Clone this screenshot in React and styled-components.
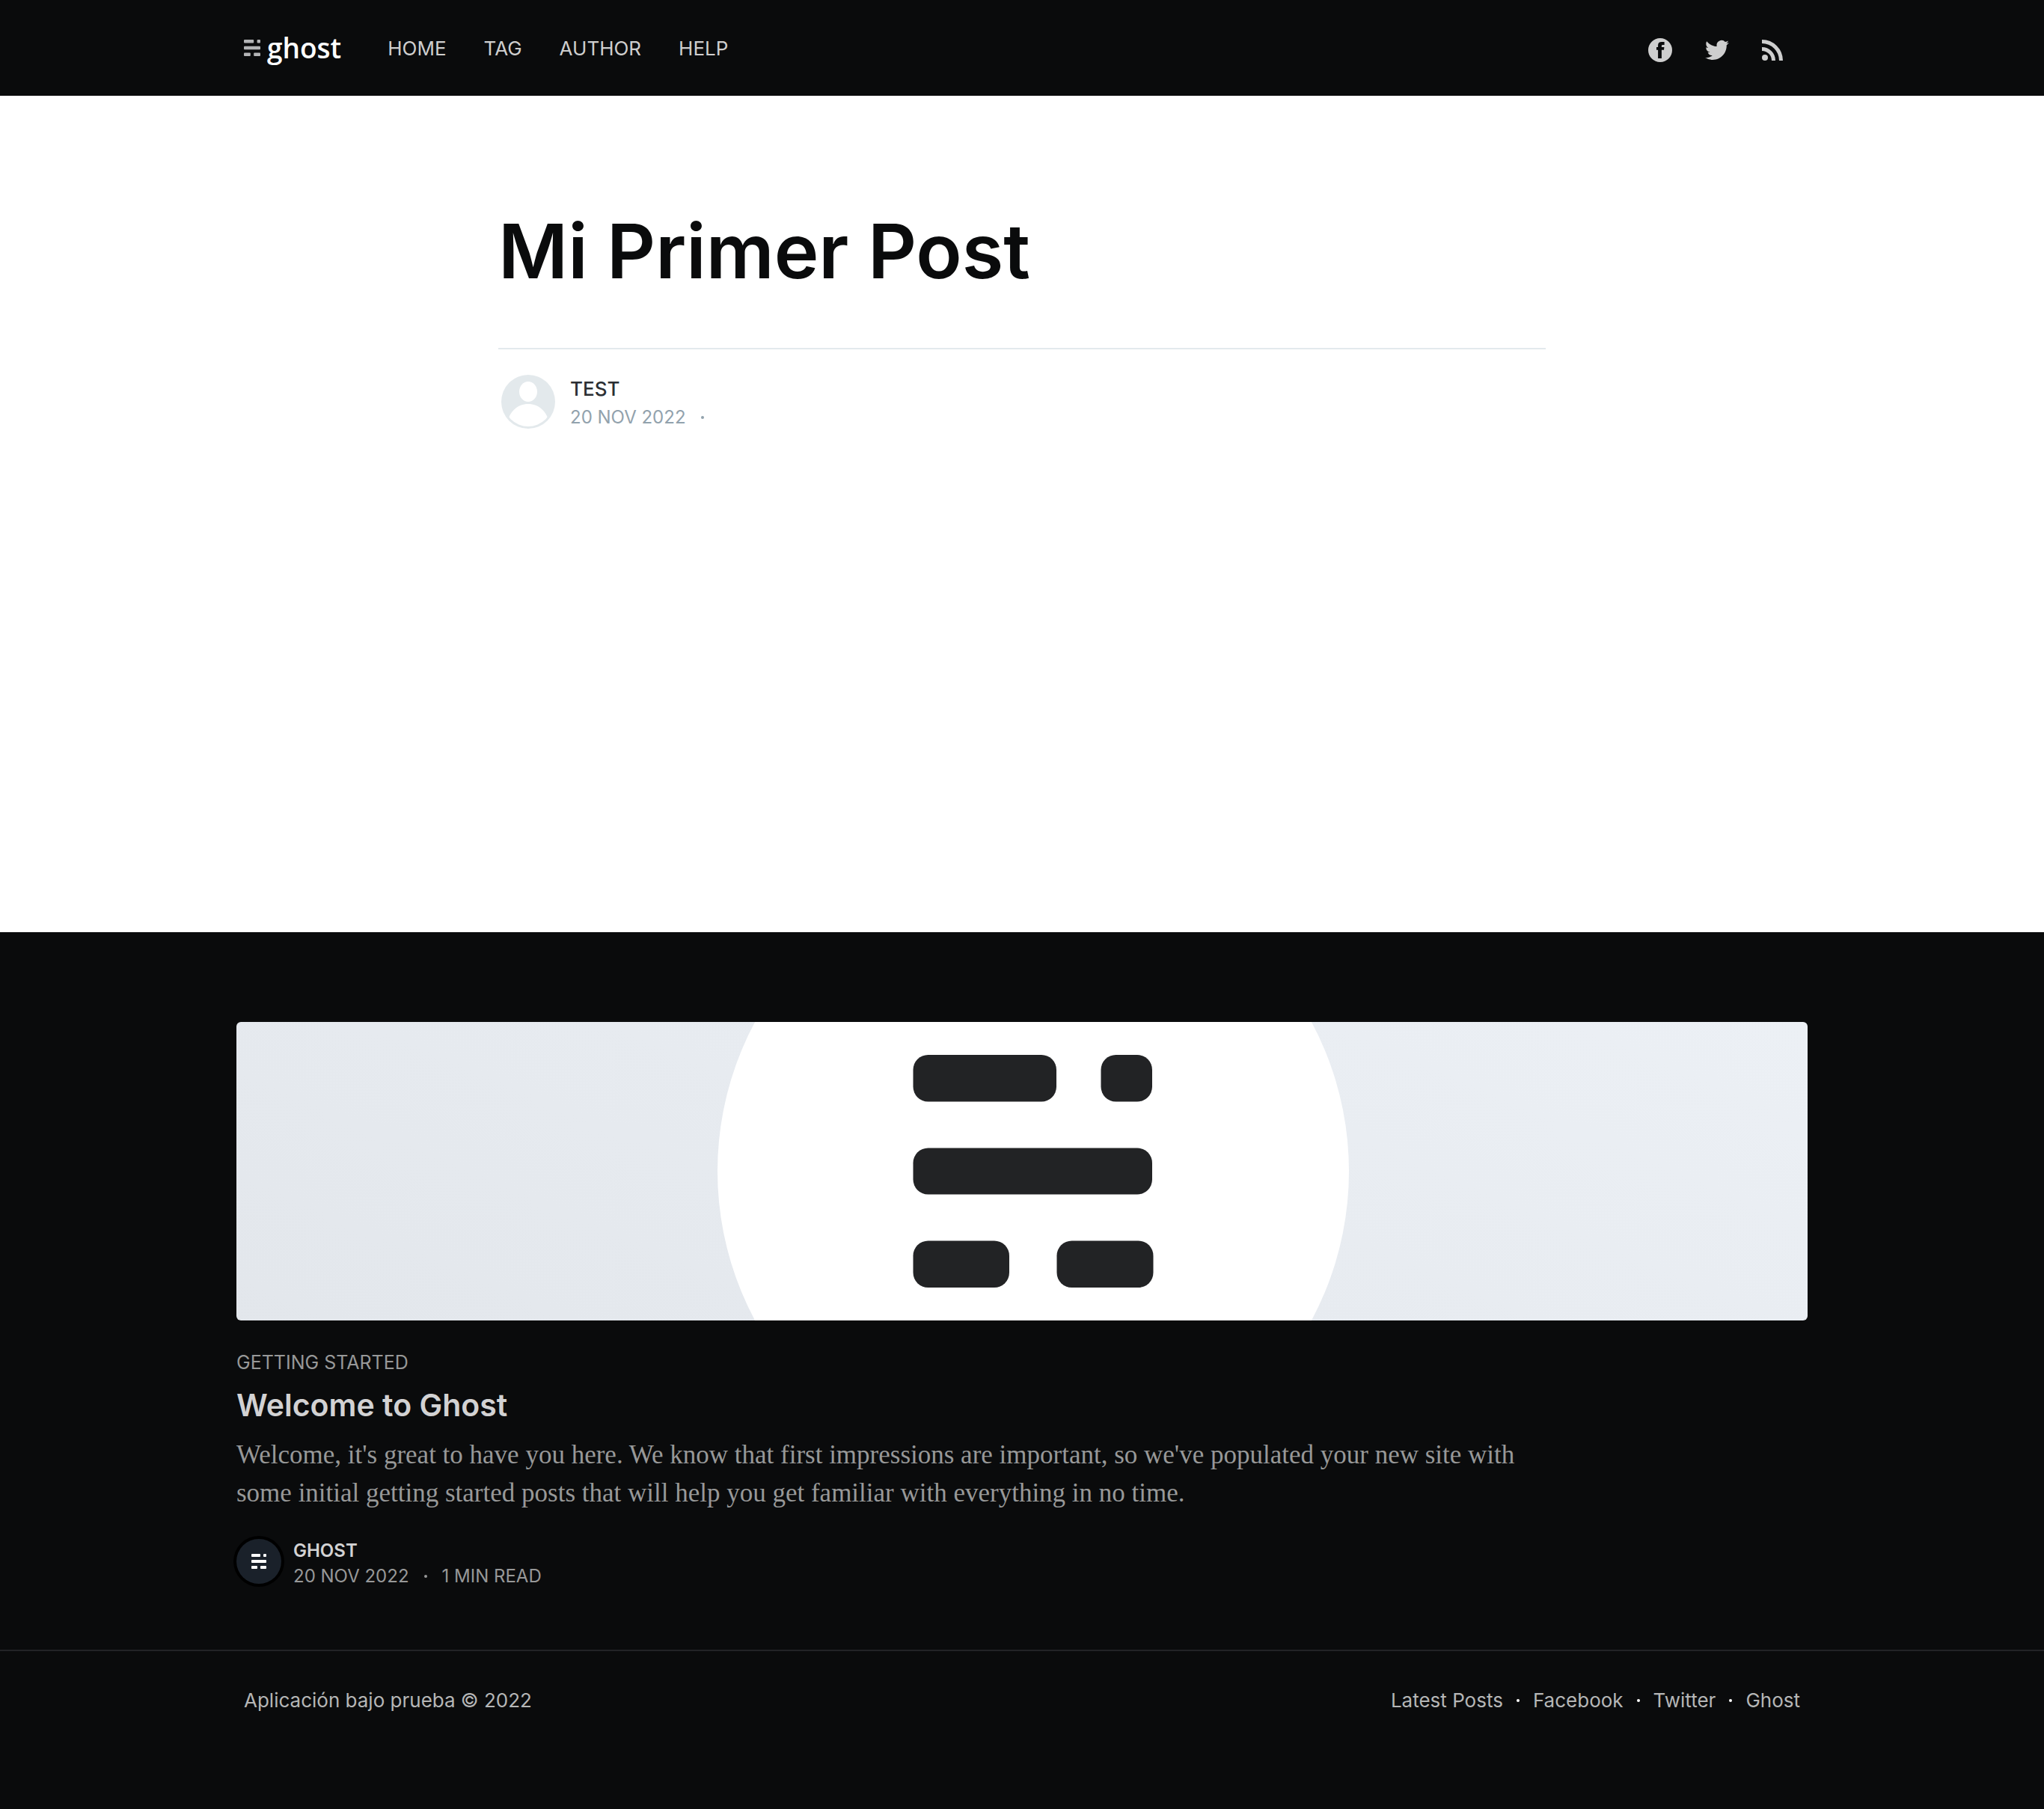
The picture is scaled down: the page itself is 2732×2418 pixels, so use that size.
import React from 'react';
import styled, { createGlobalStyle } from 'styled-components';

const INK = '#0a0b0c';
const sans = "Inter, 'Open Sans', sans-serif";
const serif = "'Liberation Serif', serif";

const GlobalStyle = createGlobalStyle`
  *, *::before, *::after { box-sizing: border-box; }
  body {
    margin: 0;
    background: ${INK};
    color: #fff;
    font-family: ${sans};
    font-size: 26px;
    -webkit-font-smoothing: antialiased;
  }
  h1, h2, p, ul { margin: 0; padding: 0; }
  ul { list-style: none; }
  a { color: inherit; text-decoration: none; }
`;

const Header = styled.header`
  display: flex;
  justify-content: center;
  padding: 0 80px;
  background: ${INK};
`;

const Nav = styled.nav`
  display: flex;
  align-items: center;
  justify-content: space-between;
  width: 100%;
  max-width: 2080px;
  min-height: 128px;
`;

const NavSide = styled.div`
  display: flex;
  align-items: center;
  gap: 62px;
`;

const Logo = styled.a`
  display: flex;
  align-items: center;
  gap: 9px;
  font-family: 'Open Sans', sans-serif;
  font-size: 37px;
  font-weight: 600;
  line-height: 52px;
`;

const NavList = styled.ul`
  display: flex;
  gap: 50px;
  padding-top: 2px;
  color: #cecece;
  font-size: 26px;
  line-height: 36px;
  text-transform: uppercase;
`;

const Socials = styled.div`
  display: flex;
  align-items: center;
  gap: 44px;
  padding: 6px 23px 0 0;
  color: #cecece;

  a { display: flex; }
`;

const Main = styled.main`
  display: flex;
  justify-content: center;
  min-height: 1118px;
  padding: 144px 80px;
  background: #fff;
`;

const Article = styled.article`
  width: 100%;
  max-width: 1400px;
`;

const PostTitle = styled.h1`
  color: ${INK};
  font-size: 101px;
  font-weight: 600;
  line-height: 126px;
`;

const PostByline = styled.section`
  display: flex;
  align-items: center;
  gap: 16px;
  margin-top: 67px;
  padding-top: 30px;
  border-top: 2px solid #e3e9ed;
`;

const BylineText = styled.div`
  display: flex;
  flex-direction: column;
  padding-top: ${(p) => (p.$large ? 4 : 6)}px;
  font-size: ${(p) => (p.$large ? 26 : 24)}px;
  line-height: ${(p) => (p.$large ? 38 : 34)}px;
  text-transform: uppercase;
`;

const AuthorName = styled.a`
  color: ${(p) => (p.$light ? '#d2d2d3' : '#2b2f33')};
  font-weight: ${(p) => (p.$light ? 600 : 500)};
`;

const Meta = styled.span`
  display: flex;
  align-items: center;
  gap: 20px;
  color: ${(p) => (p.$light ? '#979898' : '#92a2ad')};
  font-size: 24px;
`;

const Dot = styled.span`
  width: 4px;
  height: 4px;
  border-radius: 50%;
  background: currentColor;
`;

const ReadNext = styled.aside`
  display: flex;
  justify-content: center;
  padding: 120px 80px 81px;
`;

const Card = styled.article`
  width: 100%;
  max-width: 2100px;
`;

const CardImage = styled.a`
  display: block;
  overflow: hidden;
  height: 399px;
  border-radius: 6px;

  svg { display: block; width: 100%; height: 100%; }
`;

const CardTag = styled.div`
  margin-top: 39px;
  color: #979898;
  font-size: 25px;
  line-height: 34px;
  text-transform: uppercase;
`;

const CardTitle = styled.h2`
  margin-top: 14px;
  color: #d2d2d3;
  font-size: 41px;
  font-weight: 600;
  line-height: 52px;
`;

const Excerpt = styled.p`
  max-width: 1760px;
  margin-top: 15px;
  color: #979898;
  font-family: ${serif};
  font-size: 35px;
  line-height: 51px;
`;

const CardByline = styled.footer`
  display: flex;
  align-items: center;
  gap: 16px;
  margin-top: 29px;
`;

const GhostAvatar = styled.a`
  display: flex;
  align-items: center;
  justify-content: center;
  width: 60px;
  height: 60px;
  border-radius: 50%;
  background: #1a212a;
  box-shadow: 0 0 0 4px #000;
`;

const Footer = styled.footer`
  display: flex;
  justify-content: center;
  padding: 46px 80px 120px;
  border-top: 2px solid #222326;
  color: #b5b6b6;
  font-size: 26px;
  line-height: 40px;
`;

const FooterInner = styled.div`
  display: flex;
  justify-content: space-between;
  width: 100%;
  max-width: 2080px;
`;

const FooterNav = styled.nav`
  display: flex;
  align-items: center;
  gap: 18px;

  span { background: #fff; }
`;

const GhostMark = ({ size, color }) => (
  <svg width={size} height={size} viewBox="0 0 22 22" fill={color} aria-hidden="true">
    <rect x="0" y="0" width="13.200" height="4.400" rx="1" />
    <rect x="17.600" y="0" width="4.400" height="4.400" rx="1" />
    <rect x="0" y="8.800" width="22" height="4.400" rx="1" />
    <rect x="0" y="17.600" width="8.800" height="4.400" rx="1" />
    <rect x="13.200" y="17.600" width="8.800" height="4.400" rx="1" />
  </svg>
);

const FacebookIcon = () => (
  <svg width="32" height="32" viewBox="0 0 32 32" fill="currentColor" aria-hidden="true">
    <path d="M16 0a16 16 0 1 0 0 32 16 16 0 0 0 0-32zm5.6 9h-2c-1.4 0-1.700.7-1.700 1.700V12h3.500l-.4 3.800h-3.100V27h-4.800V15.800H11V12h2.100V9.300C13.100 6.500 14.800 5 18 5h3.600z" />
  </svg>
);

const TwitterIcon = () => (
  <svg width="32" height="32" viewBox="0 0 24 24" fill="currentColor" aria-hidden="true">
    <path d="M23.950 4.570a10 10 0 0 1-2.820.770 4.960 4.960 0 0 0 2.160-2.720c-.950.550-2.010.960-3.130 1.190a4.920 4.920 0 0 0-8.380 4.480C7.690 8.100 4.070 6.130 1.640 3.160a4.820 4.820 0 0 0-.670 2.480c0 1.710.870 3.210 2.190 4.100a4.900 4.900 0 0 1-2.230-.620v.060a4.920 4.920 0 0 0 3.950 4.830 5 5 0 0 1-2.210.080 4.940 4.940 0 0 0 4.600 3.420A9.870 9.870 0 0 1 0 19.540a13.990 13.990 0 0 0 7.550 2.210c9.050 0 14-7.500 14-13.980 0-.210 0-.420-.020-.630a9.940 9.940 0 0 0 2.460-2.550z" />
  </svg>
);

const RssIcon = () => (
  <svg width="28" height="28" viewBox="0 0 28 28" aria-hidden="true">
    <circle cx="4" cy="24" r="4" fill="currentColor" />
    <path d="M0 12.500A15.500 15.500 0 0 1 15.500 28M0 2.500A25.500 25.500 0 0 1 25.500 28" fill="none" stroke="currentColor" strokeWidth="5" />
  </svg>
);

const PersonAvatar = () => (
  <svg width="80" height="80" viewBox="0 0 80 80" aria-hidden="true">
    <defs>
      <clipPath id="person">
        <circle cx="40" cy="40" r="33" />
      </clipPath>
    </defs>
    <circle cx="40" cy="40" r="36" fill="#e3e9ec" />
    <ellipse cx="40" cy="26.500" rx="12" ry="13.500" fill="#fff" />
    <path d="M12 70c2-17 14-27 28-27s26 10 28 27v8H12z" fill="#fff" clipPath="url(#person)" />
  </svg>
);

const Cover = () => (
  <svg viewBox="0 0 2100 399" preserveAspectRatio="xMidYMid slice" aria-hidden="true">
    <defs>
      <linearGradient id="cover" x1="750" y1="800" x2="1350" y2="-600" gradientUnits="userSpaceOnUse">
        <stop offset="0" stopColor="#e2e6eb" />
        <stop offset="0.500" stopColor="#e8ecf1" />
        <stop offset="1" stopColor="#eef2f7" />
      </linearGradient>
    </defs>
    <rect width="2100" height="399" fill="url(#cover)" />
    <circle cx="1065" cy="199.500" r="422" fill="#fff" />
    <g fill="#222325">
      <rect x="904.500" y="44" width="191.500" height="62.500" rx="20" />
      <rect x="1155.500" y="44" width="68.500" height="62.500" rx="20" />
      <rect x="904.500" y="168.500" width="319.500" height="62" rx="20" />
      <rect x="904.500" y="292.500" width="128.500" height="62.500" rx="20" />
      <rect x="1096.500" y="292.500" width="129" height="62.500" rx="20" />
    </g>
  </svg>
);

const NAV_ITEMS = ['Home', 'Tag', 'Author', 'Help'];
const FOOTER_ITEMS = ['Latest Posts', 'Facebook', 'Twitter', 'Ghost'];

export default function App() {
  return (
    <>
      <GlobalStyle />
      <Header>
        <Nav>
          <NavSide>
            <Logo href="#">
              <GhostMark size={22} color="#b3b4b6" />
              ghost
            </Logo>
            <NavList>
              {NAV_ITEMS.map((item) => (
                <li key={item}><a href="#">{item}</a></li>
              ))}
            </NavList>
          </NavSide>
          <Socials>
            <a href="#" aria-label="Facebook"><FacebookIcon /></a>
            <a href="#" aria-label="Twitter"><TwitterIcon /></a>
            <a href="#" aria-label="RSS"><RssIcon /></a>
          </Socials>
        </Nav>
      </Header>

      <Main>
        <Article>
          <PostTitle>Mi Primer Post</PostTitle>
          <PostByline>
            <PersonAvatar />
            <BylineText $large>
              <AuthorName href="#">test</AuthorName>
              <Meta><time dateTime="2022-11-20">20 Nov 2022</time><Dot /></Meta>
            </BylineText>
          </PostByline>
        </Article>
      </Main>

      <ReadNext>
        <Card>
          <CardImage href="#" aria-label="Welcome to Ghost"><Cover /></CardImage>
          <CardTag>Getting Started</CardTag>
          <CardTitle>Welcome to Ghost</CardTitle>
          <Excerpt>
            Welcome, it's great to have you here. We know that first impressions are important, so
            we've populated your new site with some initial getting started posts that will help
            you get familiar with everything in no time.
          </Excerpt>
          <CardByline>
            <GhostAvatar href="#" aria-label="Ghost"><GhostMark size={20} color="#fff" /></GhostAvatar>
            <BylineText>
              <AuthorName href="#" $light>Ghost</AuthorName>
              <Meta $light><time dateTime="2022-11-20">20 Nov 2022</time><Dot /><span>1 min read</span></Meta>
            </BylineText>
          </CardByline>
        </Card>
      </ReadNext>

      <Footer>
        <FooterInner>
          <section>Aplicación bajo prueba © 2022</section>
          <FooterNav>
            {FOOTER_ITEMS.map((item, i) => (
              <React.Fragment key={item}>
                {i > 0 && <Dot />}
                <a href="#">{item}</a>
              </React.Fragment>
            ))}
          </FooterNav>
        </FooterInner>
      </Footer>
    </>
  );
}
